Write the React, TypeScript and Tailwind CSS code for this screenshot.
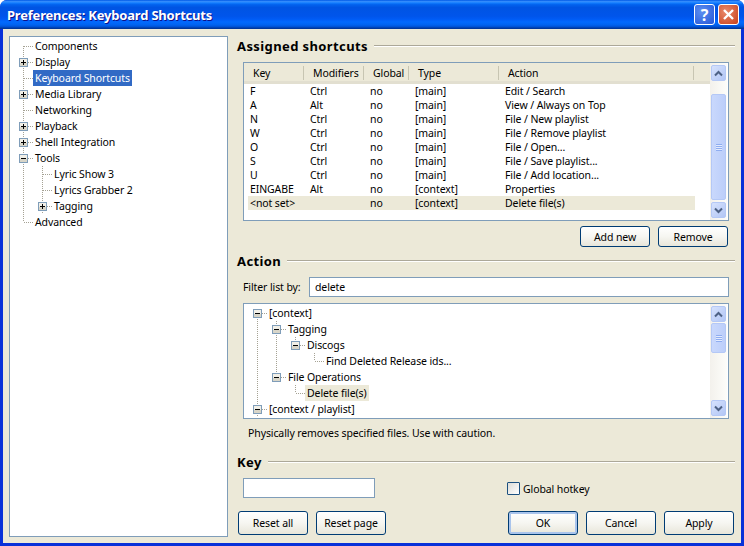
import type { ReactNode } from "react";

type Cell = "blank" | "pipe" | "top" | "tee" | "end" | "plus" | "minus" | "minusFirst" | "minusEnd";
type TreeRow = { cells: Cell[]; label: string; selected?: boolean };

const prefRows: TreeRow[] = [
  { cells: ["top"], label: "Components" },
  { cells: ["plus"], label: "Display" },
  { cells: ["tee"], label: "Keyboard Shortcuts", selected: true },
  { cells: ["plus"], label: "Media Library" },
  { cells: ["tee"], label: "Networking" },
  { cells: ["plus"], label: "Playback" },
  { cells: ["plus"], label: "Shell Integration" },
  { cells: ["minus"], label: "Tools" },
  { cells: ["pipe", "tee"], label: "Lyric Show 3" },
  { cells: ["pipe", "tee"], label: "Lyrics Grabber 2" },
  { cells: ["pipe", "plus"], label: "Tagging" },
  { cells: ["end"], label: "Advanced" },
];

const actionRows: TreeRow[] = [
  { cells: ["minusFirst"], label: "[context]" },
  { cells: ["pipe", "minus"], label: "Tagging" },
  { cells: ["pipe", "pipe", "minusEnd"], label: "Discogs" },
  { cells: ["pipe", "pipe", "blank", "end"], label: "Find Deleted Release ids..." },
  { cells: ["pipe", "minusEnd"], label: "File Operations" },
  { cells: ["pipe", "blank", "end"], label: "Delete file(s)", selected: true },
  { cells: ["minus"], label: "[context / playlist]" },
];

const shortcuts = [
  ["F", "Ctrl", "no", "[main]", "Edit / Search"],
  ["A", "Alt", "no", "[main]", "View / Always on Top"],
  ["N", "Ctrl", "no", "[main]", "File / New playlist"],
  ["W", "Ctrl", "no", "[main]", "File / Remove playlist"],
  ["O", "Ctrl", "no", "[main]", "File / Open..."],
  ["S", "Ctrl", "no", "[main]", "File / Save playlist..."],
  ["U", "Ctrl", "no", "[main]", "File / Add location..."],
  ["EINGABE", "Alt", "no", "[context]", "Properties"],
  ["<not set>", "", "no", "[context]", "Delete file(s)"],
];

const GuideCell = ({ type }: { type: Cell }) => {
  const dots = { stroke: "#a5a294", strokeWidth: 1, strokeDasharray: "1 1" };
  const isToggle = type === "plus" || type === "minus" || type === "minusFirst" || type === "minusEnd";
  const upper = type !== "blank" && type !== "top" && type !== "minusFirst";
  const lower = type === "pipe" || type === "top" || type === "tee" || type === "plus" || type === "minus" || type === "minusFirst";
  return (
    <svg width="19" height="16" viewBox="0 0 19 16" className="shrink-0">
      {upper && <line x1="9.5" y1="0" x2="9.5" y2="8" {...dots} />}
      {lower && <line x1="9.5" y1="8" x2="9.5" y2="16" {...dots} />}
      {type !== "blank" && type !== "pipe" && <line x1="10" y1="8.5" x2="19" y2="8.5" {...dots} />}
      {isToggle && (
        <>
          <rect x="5.5" y="4.5" width="8" height="8" fill="#f1efe7" stroke="#7f9db9" />
          <rect x="6" y="9" width="7" height="3" fill="#d8d5c8" />
          <line x1="7" y1="8.5" x2="12" y2="8.5" stroke="#000" />
          {type === "plus" && <line x1="9.5" y1="6" x2="9.5" y2="11" stroke="#000" />}
        </>
      )}
    </svg>
  );
};

const Tree = ({ rows, selectedClass }: { rows: TreeRow[]; selectedClass: string }) => (
  <div className="flex flex-col">
    {rows.map((row, index) => (
      <div key={index} className="flex h-4 items-center">
        {row.cells.map((cell, i) => (
          <GuideCell key={i} type={cell} />
        ))}
        <span className={`h-4 px-[2px] leading-4 whitespace-nowrap ${row.selected ? selectedClass : ""}`}>
          {row.label}
        </span>
      </div>
    ))}
  </div>
);

const Chevron = ({ up }: { up?: boolean }) => (
  <svg width="9" height="7" viewBox="0 0 9 7">
    <polyline
      points={up ? "1,5.5 4.5,2 8,5.5" : "1,1.5 4.5,5 8,1.5"}
      fill="none"
      stroke="#4d6185"
      strokeWidth="2"
    />
  </svg>
);

const ScrollButton = ({ up }: { up?: boolean }) => (
  <div className="flex h-[16px] w-[15px] items-center justify-center rounded-[2px] border border-[#b4c8f6] bg-gradient-to-br from-[#d6e2fd] to-[#b2c6f5]">
    <Chevron up={up} />
  </div>
);

const Scrollbar = ({ gapTop, thumb }: { gapTop: string; thumb: string }) => (
  <div className="flex w-[17px] shrink-0 flex-col items-center bg-gradient-to-r from-[#f3f1ec] to-[#fdfdfa] py-[2px]">
    <ScrollButton up />
    <div className={gapTop} />
    <div className={`flex w-[15px] items-center justify-center rounded-[2px] border border-[#b4c8f6] bg-gradient-to-r from-[#c9d8fc] to-[#bccefa] ${thumb}`}>
      <div className="h-[7px] w-[6px] bg-[repeating-linear-gradient(#8fadf0_0_1px,#e3ebfe_1px_2px)]" />
    </div>
    <div className="flex-1" />
    <ScrollButton />
  </div>
);

const SectionTitle = ({ children, className }: { children: ReactNode; className: string }) => (
  <div className={`flex h-[18px] items-center gap-[6px] ${className}`}>
    <span className="text-[13px] leading-[18px] font-bold tracking-[0.4px] text-black">{children}</span>
    <div className="h-[2px] flex-1 border-t border-b border-t-[#aca899] border-b-white" />
  </div>
);

const XpButton = ({ children, tall, isDefault }: { children: ReactNode; tall?: boolean; isDefault?: boolean }) => (
  <div
    className={`flex w-[70px] items-center justify-center rounded-[3px] border border-[#003c74] bg-gradient-to-b from-white via-[#f6f6f1] to-[#e8e6da] text-black ${
      tall ? "h-[24px]" : "h-[21px]"
    } ${isDefault ? "shadow-[inset_0_0_0_2px_#a9c4ec]" : ""}`}
  >
    {children}
  </div>
);

const App = () => {
  return (
    <div className="flex h-[546px] w-[744px] flex-col overflow-hidden rounded-t-[7px] bg-[#0831d9] font-['Noto_Sans',sans-serif] text-[10.5px] leading-4 tracking-[-0.1px] text-black">
      {/* title bar */}
      <div className="flex h-[29px] shrink-0 items-center justify-between bg-[linear-gradient(#0058e6_0%,#3a93ff_6%,#127dff_10%,#0262ee_16%,#0054e3_26%,#0055eb_56%,#005bf5_66%,#026afe_76%,#0062ef_86%,#0052d6_92%,#0040ab_96%,#003092_100%)] pr-[5px] pl-[7px]">
        <span className="text-[13px] font-bold tracking-[-0.2px] text-white [text-shadow:1px_1px_#0f1089]">
          Preferences: Keyboard Shortcuts
        </span>
        <div className="flex gap-[3px]">
          <div className="flex h-[21px] w-[21px] items-center justify-center rounded-[3px] border border-white bg-[radial-gradient(circle_at_35%_35%,#5d8ff0,#2456d8)] text-[16px] font-bold text-white">
            ?
          </div>
          <div className="flex h-[21px] w-[21px] items-center justify-center rounded-[3px] border border-white bg-[radial-gradient(circle_at_35%_35%,#e98a6c,#c8401a)]">
            <svg width="13" height="13" viewBox="0 0 13 13">
              <path d="M2 2 L11 11 M11 2 L2 11" stroke="#fff" strokeWidth="2.4" />
            </svg>
          </div>
        </div>
      </div>

      {/* client area */}
      <div className="mx-[3px] mb-[3px] flex min-h-0 flex-1 gap-[9px] bg-[#ece9d8] pt-[7px] pr-[6px] pb-[6px] pl-[6px]">
        <div className="w-[219px] shrink-0 border border-[#7f9db9] bg-white pt-px pl-[4px]">
          <Tree rows={prefRows} selectedClass="bg-[#316ac5] text-white" />
        </div>

        <div className="flex min-w-0 flex-1 flex-col">
          <SectionTitle className="mt-px">Assigned shortcuts</SectionTitle>

          <div className="mt-[7px] ml-[6px] flex h-[159px] w-[486px] border border-[#7f9db9] bg-white">
            <div className="min-w-0 flex-1">
              <div className="grid h-[21px] grid-cols-[60px_60px_45px_90px_195px] border-b-[3px] border-b-[#e2dfd0] bg-[#ece9d8]">
                {["Key", "Modifiers", "Global", "Type", "Action"].map((title) => (
                  <div key={title} className="flex items-center pt-[2px] pl-[9px]">
                    <span className="flex-1">{title}</span>
                    <div className="h-[14px] w-px bg-[#c7c5b2]" />
                  </div>
                ))}
              </div>
              <div className="flex flex-col pl-[4px]">
                {shortcuts.map((row, index) => (
                  <div
                    key={index}
                    className={`grid h-[14px] w-[447px] grid-cols-[60px_60px_45px_90px_192px] leading-[14px] ${
                      index === 8 ? "bg-[#ece9d8]" : ""
                    }`}
                  >
                    {row.map((value, i) => (
                      <span key={i} className="pl-[2px] whitespace-nowrap">
                        {value}
                      </span>
                    ))}
                  </div>
                ))}
              </div>
            </div>
            <Scrollbar gapTop="h-[13px]" thumb="h-[106px]" />
            <div className="w-px" />
          </div>

          <div className="mt-[5px] flex justify-end gap-[8px] pr-[7px]">
            <XpButton>Add new</XpButton>
            <XpButton>Remove</XpButton>
          </div>

          <SectionTitle className="mt-[5px]">Action</SectionTitle>

          <div className="mt-[7px] ml-[6px] flex h-[20px] w-[486px] items-center">
            <span className="w-[66px]">Filter list by:</span>
            <div className="h-full flex-1 border border-[#7f9db9] bg-white pl-[5px] leading-[18px]">delete</div>
          </div>

          <div className="mt-[6px] ml-[6px] flex h-[116px] w-[486px] border border-[#7f9db9] bg-white">
            <div className="min-w-0 flex-1 pt-px pl-[4px]">
              <Tree rows={actionRows} selectedClass="bg-[#ece9d8]" />
            </div>
            <Scrollbar gapTop="h-px" thumb="h-[30px]" />
            <div className="w-px" />
          </div>

          <div className="mt-[6px] ml-[11px]">Physically removes specified files. Use with caution.</div>

          <SectionTitle className="mt-[12px]">Key</SectionTitle>

          <div className="mt-[7px] ml-[6px] flex items-center">
            <div className="h-[20px] w-[132px] border border-[#7f9db9] bg-white" />
            <div className="ml-[132px] h-[13px] w-[13px] rounded-[1px] border border-[#1c5180] bg-gradient-to-br from-[#dcdcd7] to-white" />
            <span className="ml-[3px] pt-px">Global hotkey</span>
          </div>

          <div className="mt-[13px] mr-px ml-px flex">
            <div className="flex gap-[8px]">
              <XpButton tall>Reset all</XpButton>
              <XpButton tall>Reset page</XpButton>
            </div>
            <div className="ml-auto flex gap-[8px]">
              <XpButton tall isDefault>
                OK
              </XpButton>
              <XpButton tall>Cancel</XpButton>
              <XpButton tall>Apply</XpButton>
            </div>
          </div>
        </div>
      </div>
    </div>
  );
};

export default App;
